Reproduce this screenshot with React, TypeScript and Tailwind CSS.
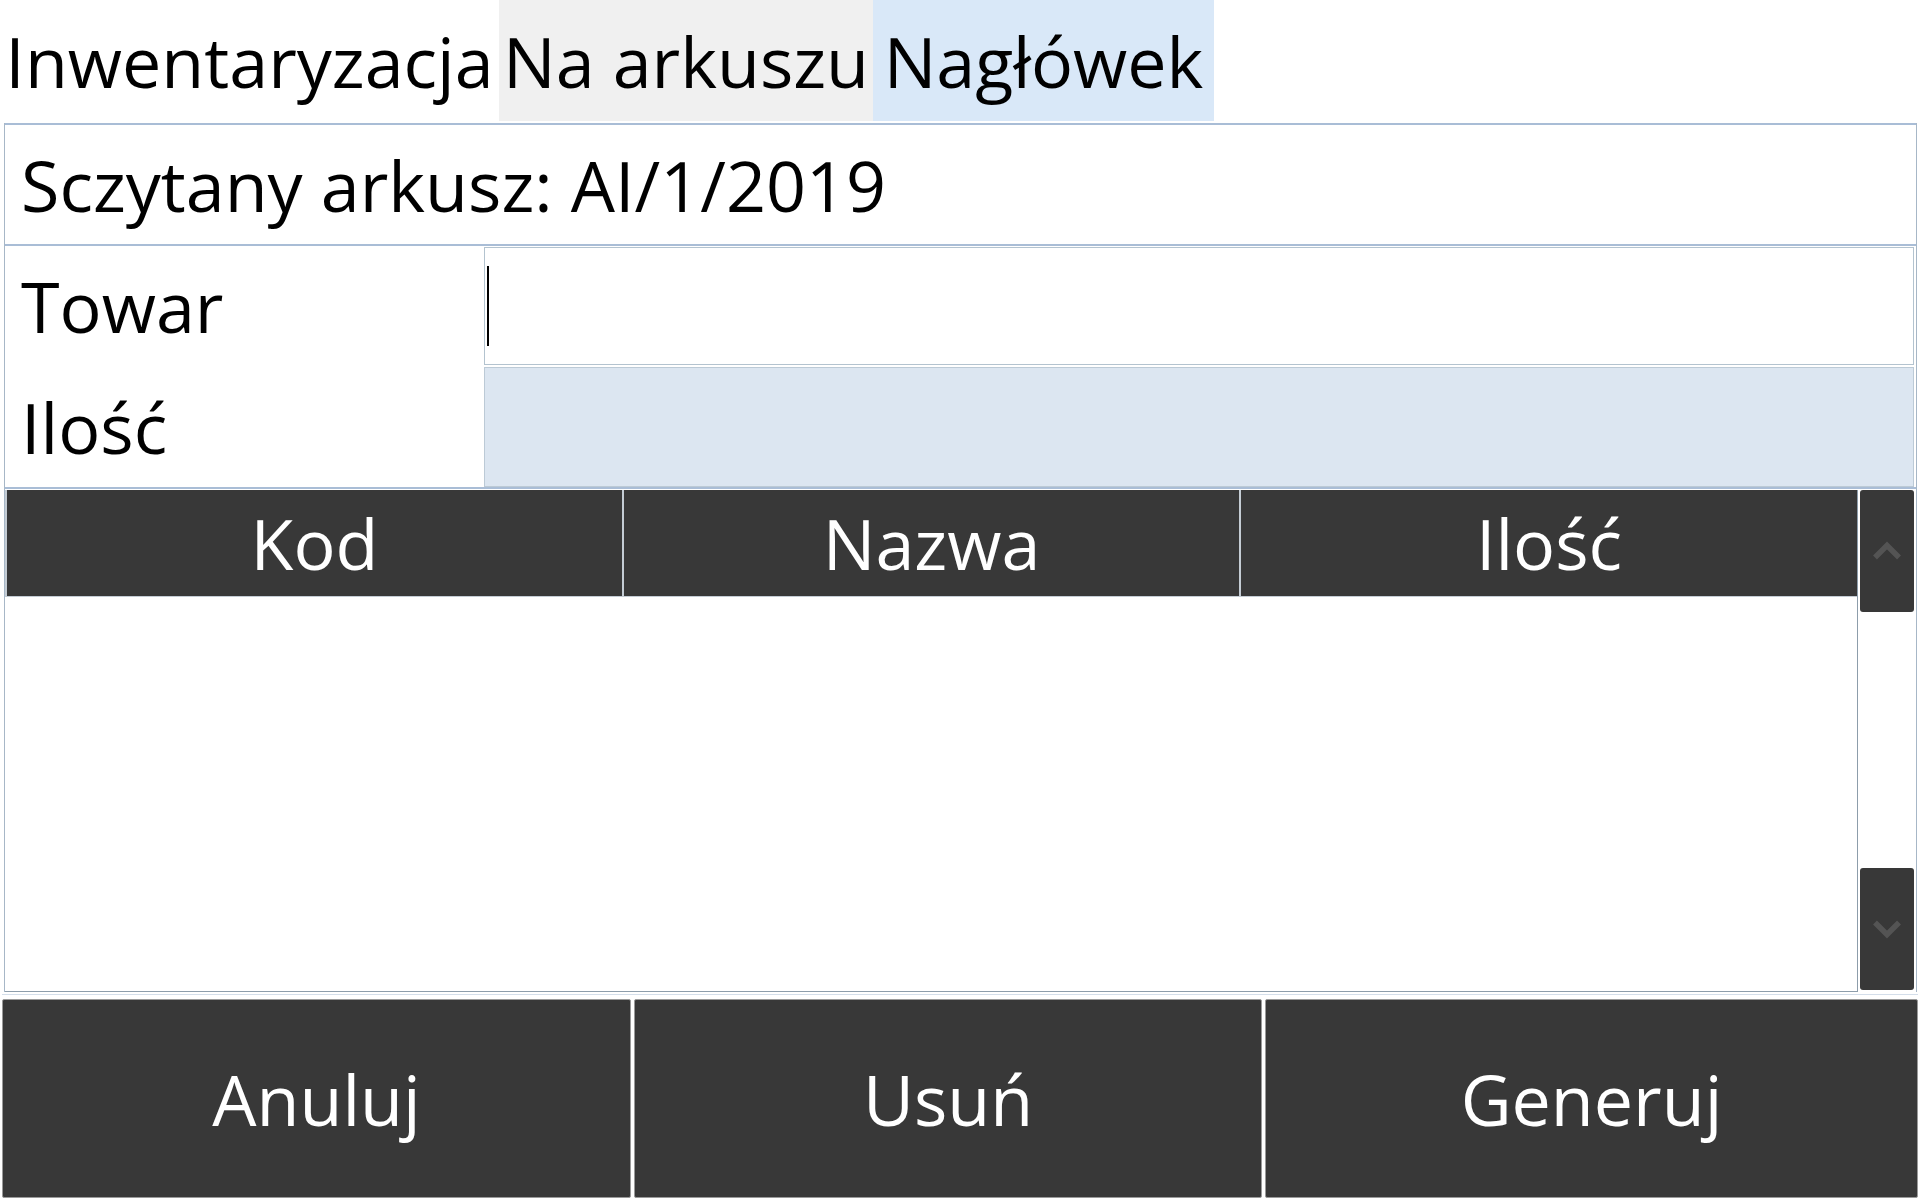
import React from "react";

const Chevron = ({ dir }: { dir: "up" | "down" }) => (
  <svg width="30" height="20" viewBox="0 0 30 20" fill="none">
    {dir === "up" ? (
      <path d="M3 16.5 L15 4.5 L27 16.5" stroke="#545454" strokeWidth="5.5" strokeLinejoin="miter" />
    ) : (
      <path d="M3 3.5 L15 15.5 L27 3.5" stroke="#545454" strokeWidth="5.5" strokeLinejoin="miter" />
    )}
  </svg>
);

export default function App() {
  return (
    <div className="w-[1920px] h-[1200px] bg-white overflow-hidden flex flex-col font-['Open_Sans',sans-serif] text-[70px] leading-none text-black">
      {/* Tabs */}
      <div className="flex h-[121px] shrink-0">
        <div className="w-[499px] flex items-center justify-center bg-white">Inwentaryzacja</div>
        <div className="w-[374px] flex items-center justify-center bg-[#f0f0f0]">Na arkuszu</div>
        <div className="w-[341px] flex items-center justify-center bg-[#d9e8f8]">Nagłówek</div>
      </div>

      {/* Framed content */}
      <div className="mt-[2px] ml-[4px] mr-[3px] flex flex-col border-x border-[#a7b7c7]">
        {/* Sheet box */}
        <div className="h-[123px] border-y-2 border-[#a9bdd6] flex items-center pl-[16px]">
          Sczytany arkusz: AI/1/2019
        </div>

        {/* Towar row */}
        <div className="h-[118px] mt-[1px] flex">
          <div className="w-[479px] flex items-center pl-[16px]">Towar</div>
          <div className="flex-1 mr-[2px] border border-[#b3c3cf] bg-white flex items-center pl-[2px]">
            <div className="w-[2px] h-[80px] bg-black" />
          </div>
        </div>

        {/* Ilość row */}
        <div className="h-[120px] mt-[2px] flex">
          <div className="w-[479px] flex items-center pl-[16px]">Ilość</div>
          <div className="flex-1 mr-[2px] border border-[#bccad6] bg-[#dce6f1]" />
        </div>

        <div className="h-[3px] border-t-2 border-[#a9bdd6]" />

        {/* Table */}
        <div className="h-[502px] flex">
          <div className="flex-1 flex flex-col border-r border-b border-[#8d9dab]">
            <div className="h-[107px] flex gap-[2px] pl-[2px] bg-[#c4ccd4] border-b border-[#c4ccd4]">
              <div className="w-[615px] bg-[#383838] text-white flex items-center justify-center">Kod</div>
              <div className="w-[615px] bg-[#383838] text-white flex items-center justify-center">Nazwa</div>
              <div className="flex-1 bg-[#383838] text-white flex items-center justify-center">Ilość</div>
            </div>
            <div className="flex-1 bg-white" />
          </div>
          <div className="w-[58px] flex flex-col justify-between pl-[2px] pr-[2px] pb-[2px]">
            <div className="h-[122px] w-[54px] rounded-[3px] bg-[#383838] flex items-center justify-center">
              <Chevron dir="up" />
            </div>
            <div className="h-[122px] w-[54px] rounded-[3px] bg-[#383838] flex items-center justify-center">
              <Chevron dir="down" />
            </div>
          </div>
        </div>
      </div>

      <div className="h-[4px] mx-[2px] mt-[2px] border-t border-[#d4deea]" />

      {/* Buttons */}
      <div className="h-[199px] mt-[1px] flex gap-[3px] px-[2px] text-white">
        <div className="w-[629px] rounded-[2px] bg-[#383838] border border-[#9a9a9a] flex items-center justify-center">Anuluj</div>
        <div className="w-[628px] rounded-[2px] bg-[#383838] border border-[#9a9a9a] flex items-center justify-center">Usuń</div>
        <div className="flex-1 rounded-[2px] bg-[#383838] border border-[#9a9a9a] flex items-center justify-center">Generuj</div>
      </div>
    </div>
  );
}
